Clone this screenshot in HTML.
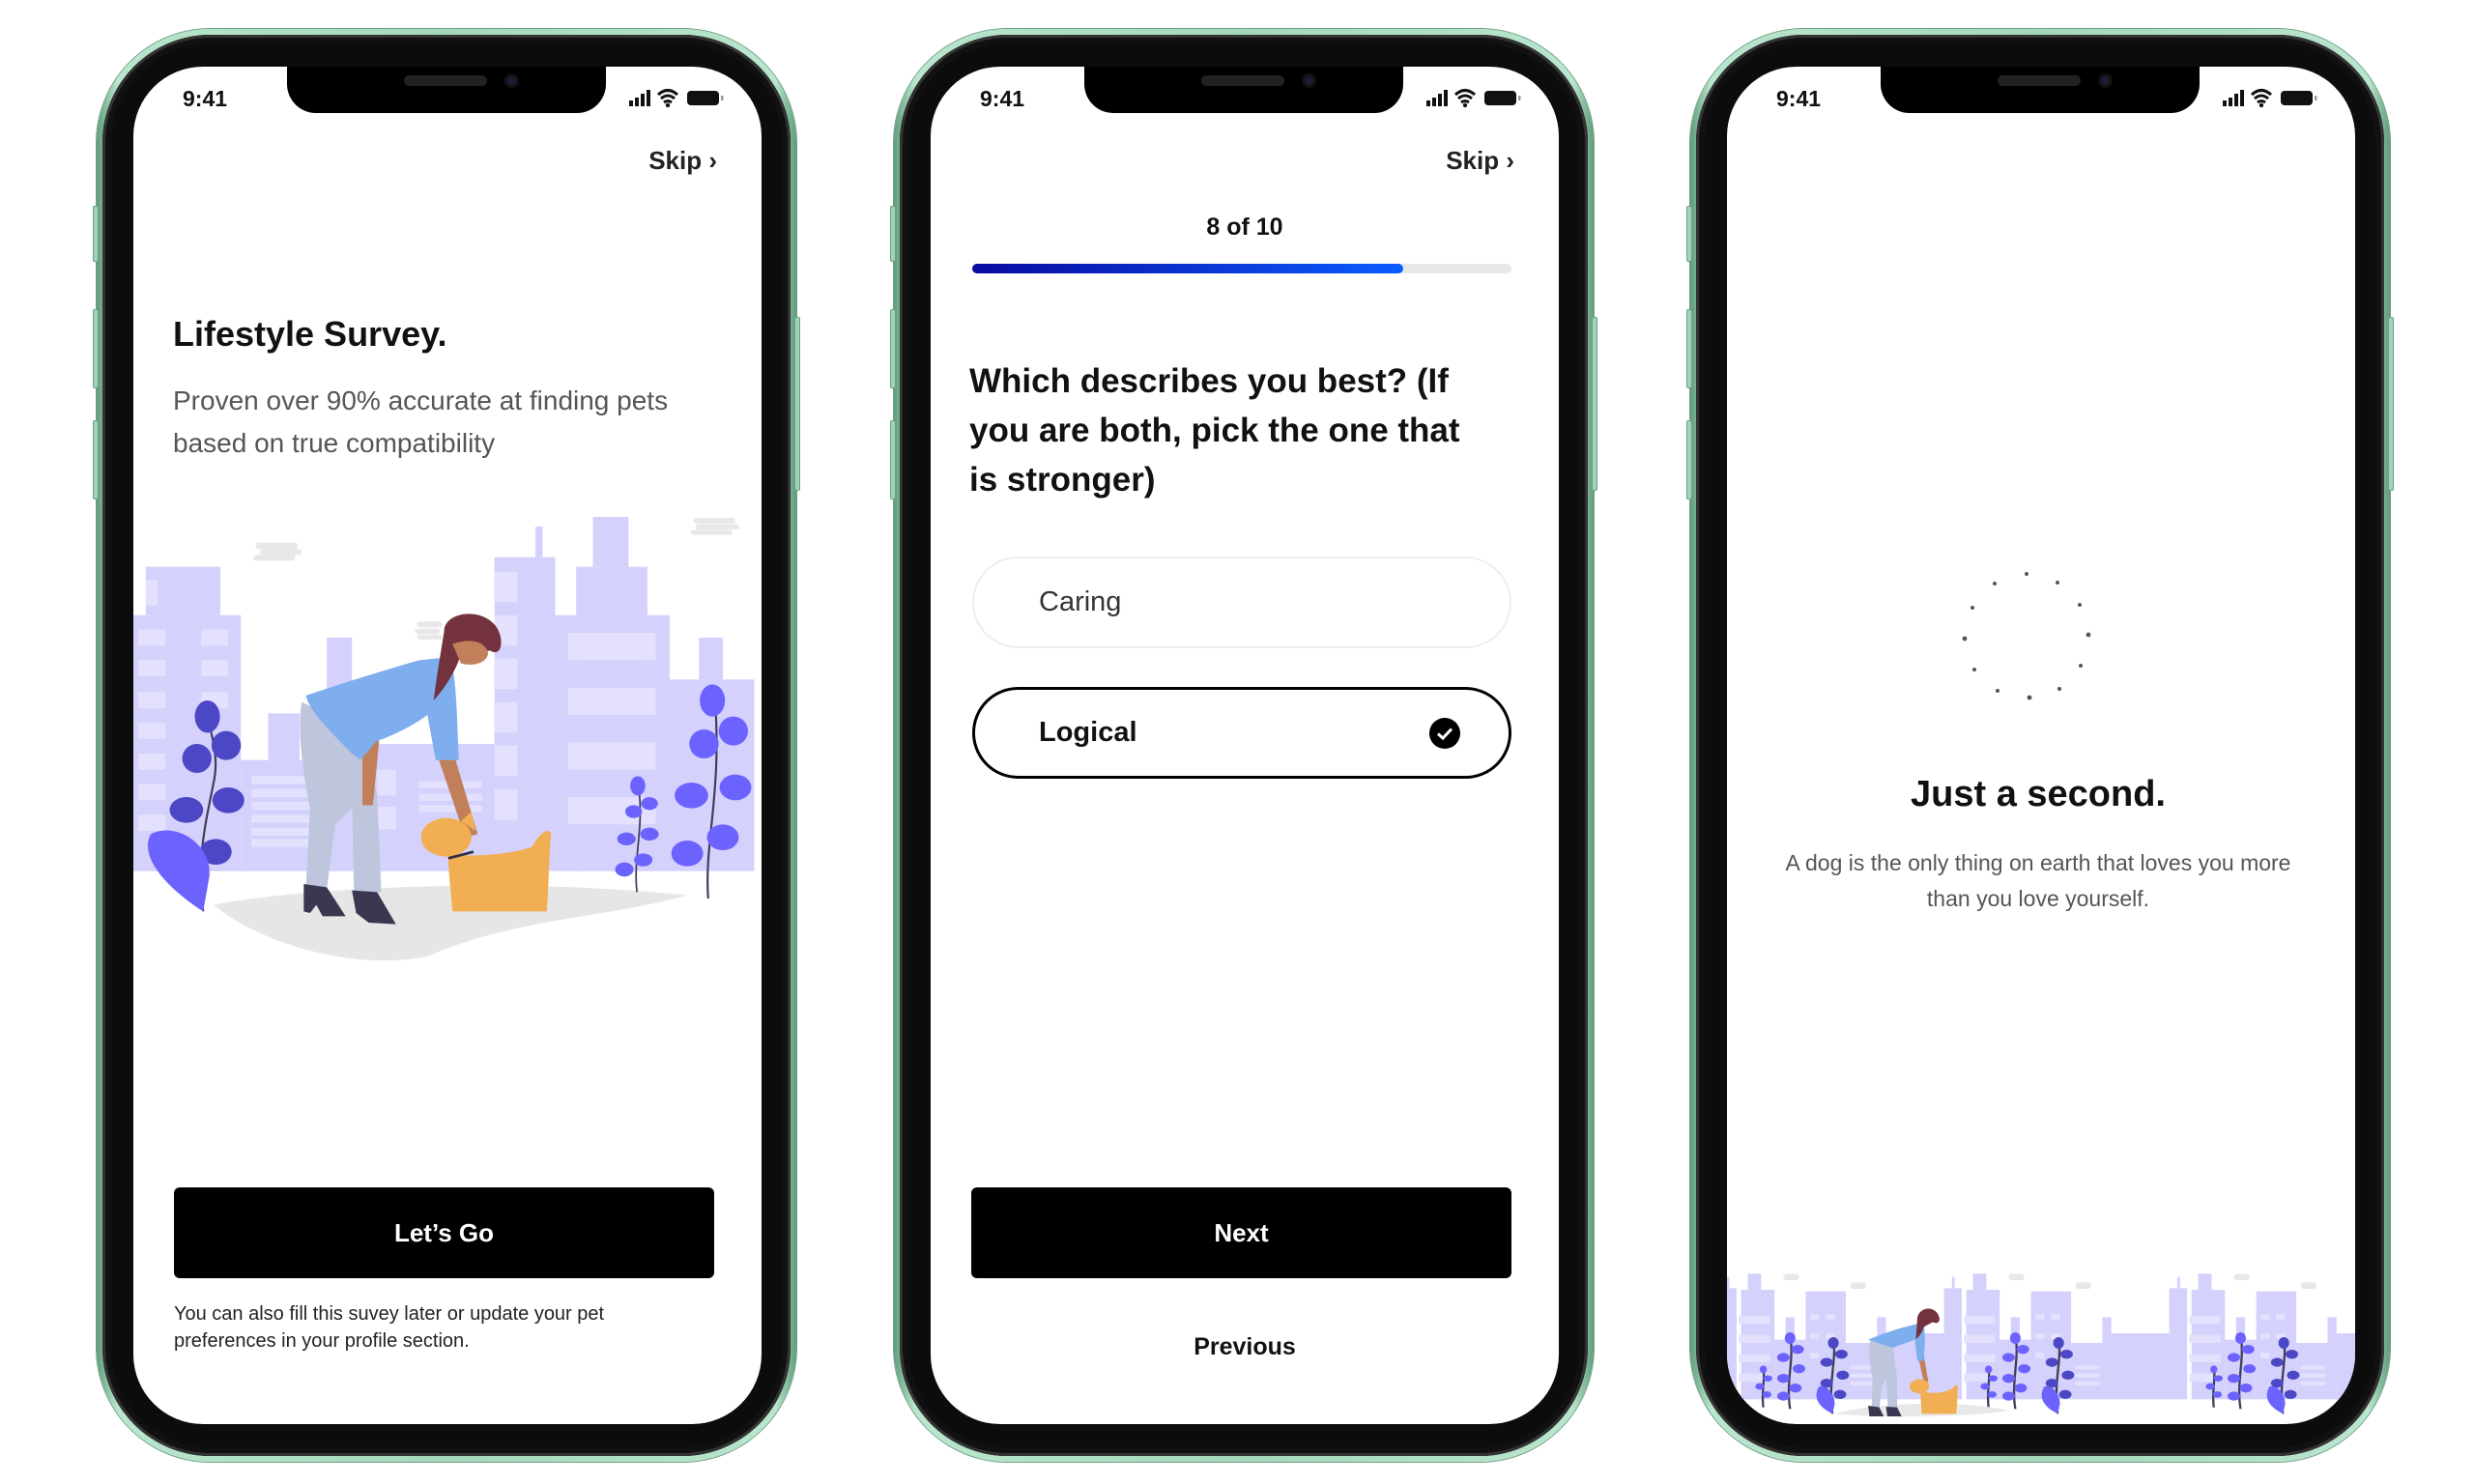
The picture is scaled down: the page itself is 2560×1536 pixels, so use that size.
<!DOCTYPE html>
<html><head><meta charset="utf-8"><style>
*{margin:0;padding:0;box-sizing:border-box}
body{width:2560px;height:1536px;background:#fff;position:relative;overflow:hidden;font-family:"Liberation Sans",Arial,sans-serif;color:#111}
.ph{position:absolute;top:0;width:900px;height:1536px}
.frame{position:absolute;left:100px;top:30px;width:724px;height:1483px;border-radius:118px;background:linear-gradient(90deg,#5f9c7c,#b9e6cd 3%,#a4d8bb 50%,#b9e6cd 97%,#5f9c7c);box-shadow:0 0 0 1px #6f9f85}
.bezel{position:absolute;left:106px;top:36px;width:712px;height:1471px;border-radius:112px;background:#0c0c0c;box-shadow:inset 0 0 0 3px #333,inset 0 0 0 9px #111}
.btn{position:absolute;background:#9fd2b6;border:1px solid #6f9f85;width:6px;border-radius:2px}
.screen{position:absolute;left:138px;top:69px;width:650px;height:1405px;border-radius:72px;background:#fff;overflow:hidden}
.notch{position:absolute;left:159px;top:-2px;width:330px;height:50px;background:#000;border-radius:0 0 30px 30px}
.spk{position:absolute;left:121px;top:11px;width:86px;height:11px;border-radius:6px;background:#222}
.cam{position:absolute;left:225px;top:9px;width:15px;height:15px;border-radius:50%;background:#1a1d33;box-shadow:inset 0 0 0 3px #111}
.time{position:absolute;left:51px;top:20px;font-size:23px;font-weight:600}
.stat{position:absolute;left:513px;top:21px}
.skip{position:absolute;right:46px;top:82px;font-size:26px;font-weight:600;color:#222}
.cta{position:absolute;left:42px;top:1160px;width:559px;height:94px;border-radius:6px;background:#000;color:#fff;font-size:26px;font-weight:bold;text-align:center;line-height:94px}
</style></head><body>

<!-- PHONE 1 -->
<div class="ph" style="left:0">
<div class="frame"></div><div class="bezel"></div>
<div class="btn" style="left:96px;top:213px;height:58px"></div>
<div class="btn" style="left:96px;top:320px;height:82px"></div>
<div class="btn" style="left:96px;top:435px;height:82px"></div>
<div class="btn" style="left:822px;top:328px;height:180px"></div>
<div class="screen">
<div class="notch"><div class="spk"></div><div class="cam"></div></div>
<div class="time">9:41</div>
<svg class="stat" width="110" height="24" viewBox="0 0 110 24"><rect x="0" y="14" width="4" height="6" fill="#111"/><rect x="6" y="11" width="4" height="9" fill="#111"/><rect x="12" y="7" width="4" height="13" fill="#111"/><rect x="18" y="3" width="4" height="17" fill="#111"/><path d="M30 8 Q40 -1 50 8 M33 12 Q40 6 47 12 M36 16 Q40 13 44 16" stroke="#111" stroke-width="3" fill="none"/><circle cx="40" cy="19" r="2.2" fill="#111"/><rect x="60" y="4" width="33" height="15" rx="4" fill="#111"/><rect x="95" y="9" width="2.5" height="5" fill="#999"/></svg>
<div class="skip">Skip &#x203A;</div>
<div style="position:absolute;left:41px;top:256px;font-size:36px;font-weight:bold;color:#111">Lifestyle Survey.</div>
<div style="position:absolute;left:41px;top:324px;font-size:28px;line-height:44px;color:#555;width:580px">Proven over 90% accurate at finding pets<br>based on true compatibility</div>
<svg style="position:absolute;left:-8px;top:451px" width="680" height="500" viewBox="0 0 1568 1500" preserveAspectRatio="none">
<g fill="#e8e8e8"><rect x="310" y="125" width="100" height="20" rx="8"/><rect x="320" y="145" width="100" height="18" rx="8"/><rect x="305" y="163" width="100" height="18" rx="8"/><rect x="1355" y="48" width="100" height="18" rx="8"/><rect x="1360" y="68" width="105" height="16" rx="8"/><rect x="1348" y="85" width="100" height="16" rx="8"/><rect x="695" y="370" width="60" height="18" rx="8"/><rect x="690" y="392" width="60" height="16" rx="8"/><rect x="695" y="410" width="60" height="16" rx="8"/></g>
<g fill="#d4d1fc"><rect x="15" y="350" width="260" height="795"/><rect x="48" y="200" width="178" height="150"/><rect x="275" y="800" width="205" height="345"/><rect x="340" y="655" width="75" height="145"/><rect x="480" y="420" width="60" height="725"/><rect x="540" y="750" width="340" height="395"/><rect x="880" y="170" width="145" height="975"/><rect x="978" y="75" width="17" height="95"/><rect x="1025" y="350" width="50" height="795"/><rect x="1075" y="200" width="170" height="945"/><rect x="1115" y="45" width="85" height="155"/><rect x="1245" y="350" width="53" height="795"/><rect x="1298" y="550" width="202" height="595"/><rect x="1368" y="420" width="57" height="130"/></g>
<g fill="#e3e1fe"><rect x="48" y="240" width="28" height="80"/><rect x="30" y="395" width="65" height="50"/><rect x="180" y="395" width="65" height="50"/><rect x="30" y="490" width="65" height="50"/><rect x="180" y="490" width="65" height="50"/><rect x="30" y="590" width="65" height="50"/><rect x="180" y="590" width="65" height="50"/><rect x="30" y="685" width="65" height="50"/><rect x="30" y="780" width="65" height="50"/><rect x="30" y="875" width="65" height="50"/><rect x="30" y="970" width="65" height="50"/><rect x="300" y="850" width="150" height="25"/><rect x="300" y="890" width="150" height="25"/><rect x="300" y="930" width="150" height="25"/><rect x="300" y="970" width="150" height="25"/><rect x="300" y="1010" width="150" height="25"/><rect x="300" y="1045" width="150" height="25"/><rect x="700" y="865" width="150" height="22"/><rect x="700" y="905" width="150" height="22"/><rect x="700" y="940" width="150" height="22"/><rect x="880" y="215" width="55" height="95"/><rect x="880" y="350" width="55" height="95"/><rect x="880" y="485" width="55" height="95"/><rect x="880" y="620" width="55" height="95"/><rect x="880" y="755" width="55" height="95"/><rect x="880" y="890" width="55" height="95"/><rect x="1055" y="405" width="210" height="85"/><rect x="1055" y="575" width="210" height="85"/><rect x="1055" y="745" width="210" height="85"/><rect x="1055" y="915" width="210" height="85"/><rect x="600" y="830" width="45" height="80"/><rect x="600" y="945" width="45" height="70"/></g>
<path d="M210 1250 C400 1200 900 1160 1340 1220 C1150 1290 930 1290 720 1410 C520 1460 300 1350 210 1250Z" fill="#e6e6e6"/>
<path d="M185 1270 C170 1100 190 1000 210 870 C225 780 200 720 195 640" stroke="#3f3d56" stroke-width="5" fill="none"/>
<g fill="#4c47c4"><ellipse cx="195" cy="665" rx="30" ry="50"/><ellipse cx="240" cy="755" rx="35" ry="45"/><ellipse cx="170" cy="795" rx="35" ry="45"/><ellipse cx="245" cy="925" rx="38" ry="40"/><ellipse cx="145" cy="955" rx="40" ry="40"/><ellipse cx="215" cy="1085" rx="38" ry="40"/></g>
<path d="M185 1270 C100 1200 30 1100 60 1030 C120 990 205 1060 200 1160Z" fill="#6c63ff"/>
<path d="M1220 1210 C1210 1100 1240 1000 1222 870" stroke="#3f3d56" stroke-width="4" fill="none"/>
<path d="M1390 1230 C1380 1050 1425 900 1405 590" stroke="#3f3d56" stroke-width="5" fill="none"/>
<g fill="#6c63ff"><ellipse cx="1222" cy="880" rx="18" ry="30"/><ellipse cx="1250" cy="935" rx="20" ry="20"/><ellipse cx="1212" cy="960" rx="20" ry="20"/><ellipse cx="1250" cy="1030" rx="22" ry="20"/><ellipse cx="1195" cy="1045" rx="22" ry="20"/><ellipse cx="1235" cy="1110" rx="22" ry="20"/><ellipse cx="1190" cy="1140" rx="22" ry="22"/><ellipse cx="1400" cy="615" rx="30" ry="50"/><ellipse cx="1450" cy="710" rx="35" ry="45"/><ellipse cx="1380" cy="750" rx="35" ry="45"/><ellipse cx="1455" cy="885" rx="38" ry="40"/><ellipse cx="1350" cy="910" rx="40" ry="40"/><ellipse cx="1425" cy="1040" rx="38" ry="40"/><ellipse cx="1340" cy="1090" rx="38" ry="40"/></g>
<path d="M420 620 L545 700 L600 900 L610 1210 L545 1210 L540 950 L500 1000 L480 1200 L430 1200 L440 950 C420 820 410 700 420 620Z" fill="#bec5dc"/>
<path d="M425 1185 L480 1195 L525 1285 L470 1285 L455 1250 L440 1275 L425 1270Z M540 1205 L600 1210 L645 1310 L580 1305 L550 1275Z" fill="#3a3850"/>
<path d="M745 790 L785 790 L840 1030 L810 1040Z M565 730 L605 740 L590 940 L565 940Z" fill="#c1805a"/>
<path d="M430 600 C520 560 620 520 700 490 L775 480 C790 560 790 650 795 800 L740 800 L720 660 C690 690 630 730 600 740 L560 800 L540 780 C480 700 440 650 430 600Z" fill="#7eaeee"/>
<path d="M760 400 C760 330 880 320 895 420 C900 470 880 470 870 460 L800 470 C790 520 760 580 735 615 C740 560 750 480 760 400Z" fill="#74323f"/>
<path d="M780 440 C820 420 860 430 865 470 C860 500 830 510 800 500Z" fill="#c1805a"/>
<path d="M770 1090 C800 1100 900 1100 970 1070 C990 1020 1010 1010 1015 1030 C1010 1100 1010 1180 1005 1270 L780 1270 C775 1200 770 1150 770 1090Z" fill="#f2ae52"/>
<ellipse cx="765" cy="1040" rx="60" ry="60" fill="#f2ae52"/><path d="M800 990 L825 960 L835 1020Z" fill="#f2ae52"/>
<path d="M770 1105 L830 1085" stroke="#2f2e41" stroke-width="8"/>
</svg>
<a class="cta" style="text-decoration:none">Let’s Go</a>
<div style="position:absolute;left:42px;top:1277px;font-size:20px;line-height:28px;color:#222">You can also fill this suvey later or update your pet<br>preferences in your profile section.</div>
</div></div>

<!-- PHONE 2 -->
<div class="ph" style="left:825px">
<div class="frame"></div><div class="bezel"></div>
<div class="btn" style="left:96px;top:213px;height:58px"></div>
<div class="btn" style="left:96px;top:320px;height:82px"></div>
<div class="btn" style="left:96px;top:435px;height:82px"></div>
<div class="btn" style="left:822px;top:328px;height:180px"></div>
<div class="screen">
<div class="notch"><div class="spk"></div><div class="cam"></div></div>
<div class="time">9:41</div>
<svg class="stat" width="110" height="24" viewBox="0 0 110 24"><rect x="0" y="14" width="4" height="6" fill="#111"/><rect x="6" y="11" width="4" height="9" fill="#111"/><rect x="12" y="7" width="4" height="13" fill="#111"/><rect x="18" y="3" width="4" height="17" fill="#111"/><path d="M30 8 Q40 -1 50 8 M33 12 Q40 6 47 12 M36 16 Q40 13 44 16" stroke="#111" stroke-width="3" fill="none"/><circle cx="40" cy="19" r="2.2" fill="#111"/><rect x="60" y="4" width="33" height="15" rx="4" fill="#111"/><rect x="95" y="9" width="2.5" height="5" fill="#999"/></svg>
<div class="skip">Skip &#x203A;</div>
<div style="position:absolute;left:0;width:650px;text-align:center;top:152px;font-size:25px;font-weight:bold">8 of 10</div>
<div style="position:absolute;left:43px;top:204px;width:558px;height:10px;border-radius:5px;background:#e8e8e8"><div style="width:446px;height:10px;border-radius:5px;background:linear-gradient(90deg,#0a0aa0,#0a5cff)"></div></div>
<div style="position:absolute;left:40px;top:300px;font-size:35px;line-height:51px;font-weight:bold;width:600px;white-space:nowrap">Which describes you best? (If<br>you are both, pick the one that<br>is stronger)</div>
<div style="position:absolute;left:43px;top:507px;width:558px;height:95px;border:2px solid #eee;border-radius:48px;font-size:29px;line-height:91px;padding-left:67px;color:#333">Caring</div>
<div style="position:absolute;left:43px;top:642px;width:558px;height:95px;border:3px solid #000;border-radius:48px;font-size:29px;line-height:89px;padding-left:66px;font-weight:bold">Logical
<svg style="position:absolute;left:469px;top:28px" width="34" height="34" viewBox="0 0 34 34"><circle cx="17" cy="17" r="16" fill="#000"/><path d="M10 17.5 L15 22 L24 12.5" stroke="#fff" stroke-width="3" fill="none"/></svg></div>
<div class="cta">Next</div>
<div style="position:absolute;left:0;width:650px;text-align:center;top:1311px;font-size:25px;font-weight:bold">Previous</div>
</div></div>

<!-- PHONE 3 -->
<div class="ph" style="left:1649px">
<div class="frame"></div><div class="bezel"></div>
<div class="btn" style="left:96px;top:213px;height:58px"></div>
<div class="btn" style="left:96px;top:320px;height:82px"></div>
<div class="btn" style="left:96px;top:435px;height:82px"></div>
<div class="btn" style="left:822px;top:328px;height:180px"></div>
<div class="screen">
<div class="notch"><div class="spk"></div><div class="cam"></div></div>
<div class="time">9:41</div>
<svg class="stat" width="110" height="24" viewBox="0 0 110 24"><rect x="0" y="14" width="4" height="6" fill="#111"/><rect x="6" y="11" width="4" height="9" fill="#111"/><rect x="12" y="7" width="4" height="13" fill="#111"/><rect x="18" y="3" width="4" height="17" fill="#111"/><path d="M30 8 Q40 -1 50 8 M33 12 Q40 6 47 12 M36 16 Q40 13 44 16" stroke="#111" stroke-width="3" fill="none"/><circle cx="40" cy="19" r="2.2" fill="#111"/><rect x="60" y="4" width="33" height="15" rx="4" fill="#111"/><rect x="95" y="9" width="2.5" height="5" fill="#999"/></svg>
<svg style="position:absolute;left:240px;top:520px" width="140" height="140" viewBox="0 0 140 140"><g fill="#555">
<circle cx="70" cy="5" r="2"/><circle cx="102" cy="14" r="2"/><circle cx="125" cy="37" r="2"/><circle cx="134" cy="68" r="2.4"/><circle cx="126" cy="100" r="2"/><circle cx="104" cy="124" r="2"/><circle cx="73" cy="133" r="2.4"/><circle cx="40" cy="126" r="2"/><circle cx="16" cy="104" r="2"/><circle cx="6" cy="72" r="2.4"/><circle cx="14" cy="40" r="2"/><circle cx="37" cy="15" r="2"/></g></svg>
<div style="position:absolute;left:0;width:644px;text-align:center;top:732px;font-size:38px;font-weight:bold">Just a second.</div>
<div style="position:absolute;left:0;width:644px;text-align:center;top:806px;font-size:23px;line-height:37px;color:#555">A dog is the only thing on earth that loves you more<br>than you love yourself.</div>
<svg style="position:absolute;left:-27px;top:1211px" width="720" height="256" viewBox="0 0 1560 768" preserveAspectRatio="none">
<defs><g id="tile">
<g fill="#d4d1fc"><rect x="40" y="160" width="40" height="345"/><rect x="58" y="125" width="6" height="40"/><rect x="90" y="165" width="75" height="340"/><rect x="105" y="115" width="30" height="55"/><rect x="165" y="320" width="70" height="185"/><rect x="190" y="250" width="20" height="75"/><rect x="235" y="170" width="90" height="335"/><rect x="325" y="330" width="70" height="175"/><rect x="395" y="250" width="20" height="255"/><rect x="415" y="300" width="130" height="205"/></g>
<g fill="#e3e1fe"><rect x="85" y="245" width="70" height="25"/><rect x="85" y="305" width="70" height="25"/><rect x="85" y="365" width="70" height="25"/><rect x="85" y="425" width="70" height="25"/><rect x="245" y="240" width="20" height="18"/><rect x="280" y="240" width="20" height="18"/><rect x="245" y="300" width="20" height="18"/><rect x="280" y="300" width="20" height="18"/><rect x="245" y="360" width="20" height="18"/><rect x="335" y="400" width="55" height="12"/><rect x="335" y="425" width="55" height="12"/><rect x="335" y="450" width="55" height="12"/></g>
<g fill="#e8e8e8"><rect x="185" y="115" width="35" height="20" rx="8"/><rect x="335" y="142" width="35" height="20" rx="8"/></g>
<g stroke="#3f3d56" stroke-width="5" fill="none"><path d="M140 530 C135 480 145 440 140 405"/><path d="M200 535 C190 450 210 380 200 305"/><path d="M295 550 C285 450 305 380 297 320"/></g>
<g fill="#6c63ff"><ellipse cx="140" cy="412" rx="8" ry="12"/><ellipse cx="150" cy="440" rx="10" ry="10"/><ellipse cx="132" cy="465" rx="10" ry="10"/><ellipse cx="148" cy="490" rx="10" ry="10"/><ellipse cx="200" cy="315" rx="12" ry="18"/><ellipse cx="217" cy="350" rx="14" ry="14"/><ellipse cx="185" cy="375" rx="14" ry="14"/><ellipse cx="220" cy="410" rx="14" ry="14"/><ellipse cx="185" cy="440" rx="14" ry="14"/><ellipse cx="212" cy="470" rx="14" ry="14"/><ellipse cx="185" cy="495" rx="14" ry="14"/></g>
<g fill="#4c47c4"><ellipse cx="297" cy="330" rx="12" ry="18"/><ellipse cx="315" cy="365" rx="14" ry="14"/><ellipse cx="282" cy="390" rx="14" ry="14"/><ellipse cx="318" cy="430" rx="14" ry="14"/><ellipse cx="282" cy="455" rx="14" ry="14"/><ellipse cx="312" cy="490" rx="14" ry="14"/></g>
<path d="M295 550 C265 530 250 500 265 465 C285 460 300 490 300 520Z" fill="#6c63ff"/>
</g></defs>
<use href="#tile"/><use href="#tile" x="505"/><use href="#tile" x="1010"/>
<rect x="1545" y="160" width="20" height="345" fill="#d4d1fc"/>
<path d="M300 550 C400 510 600 510 690 540 C600 560 400 565 300 550Z" fill="#e8e8e8"/>
<path d="M380 320 L430 340 L440 440 L440 540 L420 540 L415 440 L405 470 L400 540 L383 540 L385 440 C378 400 376 350 380 320Z" fill="#bec5dc"/>
<path d="M375 525 L400 530 L410 558 L378 558Z M415 528 L440 530 L450 558 L418 558Z" fill="#3a3850"/>
<path d="M480 330 L495 330 L510 450 L500 452Z" fill="#c1805a"/>
<path d="M375 320 C410 300 450 280 490 270 L500 275 C505 320 500 350 500 385 L485 385 L480 320 C460 330 440 340 430 345Z" fill="#7eaeee"/>
<path d="M485 260 C485 215 530 210 535 255 C535 270 525 270 520 265 L500 280 C495 300 490 310 482 318Z" fill="#74323f"/>
<path d="M492 480 C520 490 550 485 565 470 C570 460 575 458 576 465 C575 500 575 525 572 550 L495 550Z" fill="#f2ae52"/><ellipse cx="490" cy="465" rx="22" ry="22" fill="#f2ae52"/>
</svg>
</div></div>
</body></html>
